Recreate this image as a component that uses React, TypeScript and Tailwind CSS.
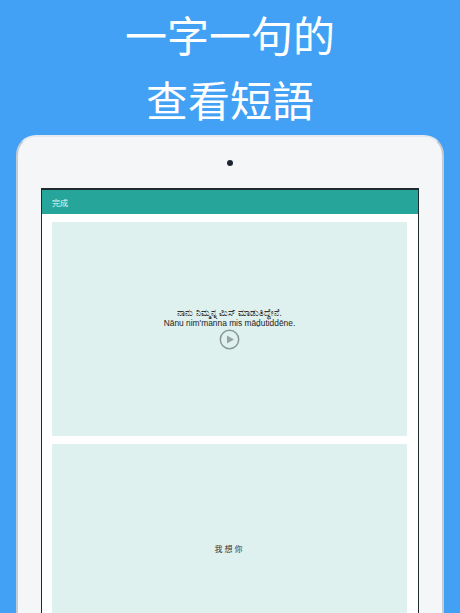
import React from "react";

export default function App() {
  return (
    <div className="w-[460px] h-[613px] overflow-hidden bg-[#42a1f5] flex flex-col items-center font-['Noto_Sans','Noto_Sans_CJK_TC',sans-serif]">
      <div className="h-[135px] pt-[1px] shrink-0 text-center text-white text-[42px] leading-[65px] font-normal font-['Noto_Sans_CJK_TC','Noto_Sans_CJK_JP',sans-serif]">
        <div>一字一句的</div>
        <div>查看短語</div>
      </div>
      <div className="w-[428px] flex-1 min-h-0 bg-[#f4f6f8] rounded-t-[20px] border-t-2 border-x-2 border-t-[#e3e9ee] border-x-[#c3cbd3] flex flex-col items-center">
        <div className="h-[51px] shrink-0 flex items-center justify-center">
          <div className="w-[6px] h-[6px] rounded-full bg-[#1d2733]" />
        </div>
        <div className="w-[378px] flex-1 min-h-0 border-t-2 border-x border-[#1f2a2e] bg-white flex flex-col">
          <div className="h-[24px] shrink-0 bg-[#26a69a] flex items-center pl-[10px] pt-[1px] text-[8px] text-[#e6f5f3] font-['Noto_Sans_CJK_TC',sans-serif]">
            完成
          </div>
          <div className="flex-1 min-h-0 flex flex-col gap-[8px] pt-[8px] pl-[10px] pr-[11px]">
            <div className="h-[214px] shrink-0 bg-[#dff1ee] flex flex-col items-center justify-center pb-[2px]">
              <div className="text-[9px] leading-[11px] text-[#333] font-['Noto_Sans','Noto_Sans_CJK_TC',sans-serif]">
                ನಾನು ನಿಮ್ಮನ್ನ ಮಿಸ್ ಮಾಡುತಿದ್ದೇನೆ.
              </div>
              <div className="text-[8.4px] leading-[10px] text-[#222] font-['Liberation_Sans',sans-serif]">
                Nānu nim'manna mis māḍutiddēne.
              </div>
              <svg width="21" height="21" viewBox="0 0 21 21" className="mt-[1px]">
                <circle cx="10.5" cy="10.5" r="9.2" fill="none" stroke="#8a9696" strokeWidth="1.5" />
                <path d="M8 6.5 L15 10.5 L8 14.5 Z" fill="#98a3a3" />
              </svg>
            </div>
            <div className="flex-1 min-h-0 bg-[#dff1ee]">
              <div className="h-[210px] flex items-center justify-center text-[8px] tracking-[2px] text-[#333] font-['Noto_Sans_CJK_TC',sans-serif]">
                我想你
              </div>
            </div>
          </div>
        </div>
      </div>
    </div>
  );
}
